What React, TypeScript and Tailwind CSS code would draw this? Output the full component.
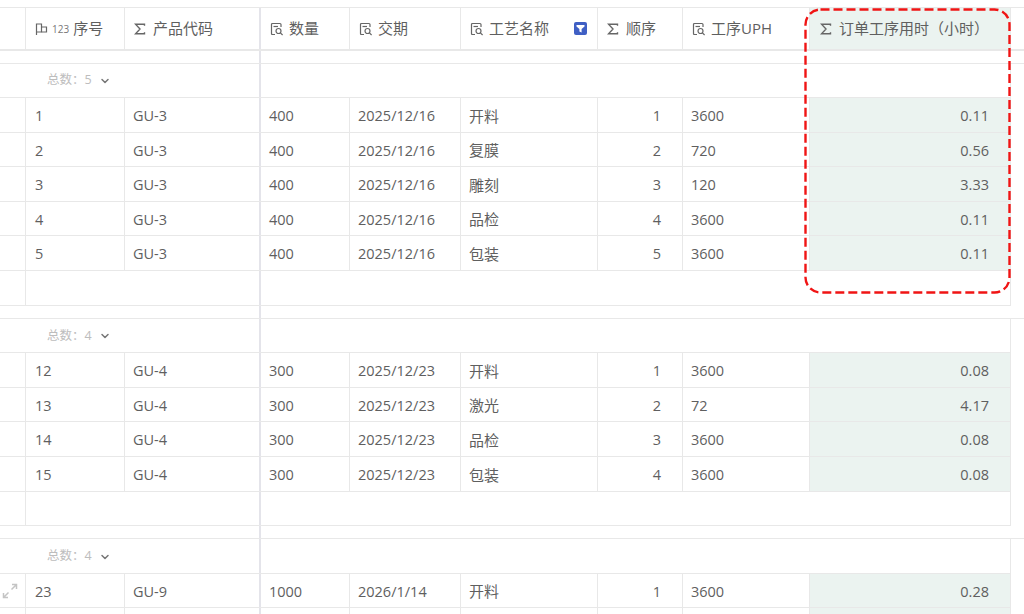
import { ChevronDown } from "lucide-react";

const font = { fontFamily: '"Open Sans","Noto Sans CJK SC",sans-serif' };

const Sigma = () => (
  <svg width="12" height="12" viewBox="0 0 12 12" fill="none" stroke="#666" strokeWidth="1.4" className="shrink-0">
    <path d="M10.5 2.8V1.2H1.5L6 6 1.5 10.8H10.5V9.2" />
  </svg>
);
const DocSearch = () => (
  <svg width="14" height="14" viewBox="0 0 14 14" fill="none" stroke="#666" strokeWidth="1.2" className="shrink-0">
    <path d="M5 12.5H2.5Q1.5 12.5 1.5 11.5V2.5Q1.5 1.5 2.5 1.5H10Q11 1.5 11 2.5V5" />
    <path d="M3.5 4.5H8" />
    <circle cx="8.5" cy="9" r="2.5" />
    <path d="M10.4 10.9L12.6 13" />
  </svg>
);
const Flag = () => (
  <svg width="13" height="14" viewBox="0 0 13 14" fill="none" stroke="#666" strokeWidth="1.2" className="shrink-0">
    <path d="M1.5 13V1.5M1.5 2H6.5V10H1.5" />
    <path d="M6.5 5H11.5V10H6.5" />
  </svg>
);
const Funnel = () => (
  <span className="flex h-[13px] w-[13px] shrink-0 items-center justify-center rounded-[2px] bg-[#3f5fc4]">
    <svg width="9" height="9" viewBox="0 0 9 9" fill="#fff">
      <path d="M0.5 1H8.5V2.6L5.6 5V8.4L3.4 7.4V5L0.5 2.6Z" />
    </svg>
  </span>
);
const ExpandIcon = () => (
  <svg width="16" height="16" viewBox="0 0 16 16" fill="none" stroke="#c4c4c4" strokeWidth="1.5">
    <path d="M9.5 6.5L14.5 1.5M10 1.5H14.5V6M6.5 9.5L1.5 14.5M1.5 10V14.5H6" />
  </svg>
);

const headerCell = "flex h-full items-center border-r border-[#e8e8e8] pl-[9px]";
const dataCell = "flex h-full items-center border-r border-[#e8e8e8] pt-[2px]";

const SigmaLabel = ({ text }: { text: string }) => (
  <span className="flex items-center gap-[7px] whitespace-nowrap">
    <Sigma />
    <span>{text}</span>
  </span>
);
const DocLabel = ({ text }: { text: string }) => (
  <span className="flex items-center gap-[5px] whitespace-nowrap">
    <DocSearch />
    <span>{text}</span>
  </span>
);

const Header = () => (
  <div className="flex h-[44px] w-full items-stretch border-y border-b-2 border-[#e8e8e8] text-[15px] text-[#5f5f5f]">
    <div className="h-full w-[26px] border-r border-[#e8e8e8]" />
    <div className={`${headerCell} w-[99px] gap-[4px]`}>
      <Flag />
      <span className="text-[10px] leading-none text-[#777]">123</span>
      <span>序号</span>
    </div>
    <div className="flex h-full w-[136px] items-center border-r-2 border-[#e4e4ea] pl-[9px]"><SigmaLabel text="产品代码" /></div>
    <div className={`${headerCell} w-[89px]`}><DocLabel text="数量" /></div>
    <div className={`${headerCell} w-[111px]`}><DocLabel text="交期" /></div>
    <div className={`${headerCell} w-[137px] justify-between pr-[10px]`}>
      <DocLabel text="工艺名称" />
      <Funnel />
    </div>
    <div className={`${headerCell} w-[85px]`}><SigmaLabel text="顺序" /></div>
    <div className={`${headerCell} w-[127px]`}><DocLabel text="工序UPH" /></div>
    <div className="flex h-full w-[201px] items-center border-r border-[#e8e8e8] bg-[#ebf3f0] pl-[10px]"><SigmaLabel text="订单工序用时（小时）" /></div>
  </div>
);

const Band = ({ h }: { h: string }) => (
  <div className={`flex w-full border-b border-[#e8e8e8] ${h}`}>
    <div className="h-full w-[261px] border-r-2 border-[#e4e4ea]" />
  </div>
);

const GroupRow = ({ total }: { total: number }) => (
  <div className="flex h-[34.6px] w-[1011px] border-b border-[#e8e8e8]">
    <div className="flex h-full w-[261px] items-center gap-[7px] border-r-2 border-[#e4e4ea] pl-[47px] pt-[1px] text-[12.5px] text-[#bdbdbd]">
      <span>总数：{total}</span>
      <ChevronDown size={12} strokeWidth={3} className="text-[#777]" />
    </div>
    <div className="h-full flex-1 border-r border-[#e8e8e8]" />
  </div>
);

const EmptyRow = () => (
  <div className="flex h-[34.6px] w-[1011px] border-b border-[#e8e8e8]">
    <div className="h-full w-[26px] border-r border-[#e8e8e8]" />
    <div className="h-full w-[235px] border-r-2 border-[#e4e4ea]" />
    <div className="h-full flex-1 border-r border-[#e8e8e8]" />
  </div>
);

type R = [string, string, string, string, string, string, string, string];

const DataRow = ({ r, expand }: { r: R; expand?: boolean }) => (
  <div className="flex h-[34.6px] w-[1011px] border-b border-[#e8e8e8] text-[14.5px] text-[#5f5f5f]">
    <div className="flex h-full w-[26px] items-center justify-center border-r border-[#e8e8e8] pr-[5px]">
      {expand && <ExpandIcon />}
    </div>
    <div className={`${dataCell} w-[99px] pl-[9px]`}>{r[0]}</div>
    <div className="flex h-full w-[136px] items-center border-r-2 border-[#e4e4ea] pl-[8px] pt-[2px]">{r[1]}</div>
    <div className={`${dataCell} w-[89px] pl-[8px]`}>{r[2]}</div>
    <div className={`${dataCell} w-[111px] pl-[8px]`}>{r[3]}</div>
    <div className={`${dataCell} w-[137px] pl-[8px] text-[15px]`}>{r[4]}</div>
    <div className={`${dataCell} w-[85px] justify-end pr-[21px]`}>{r[5]}</div>
    <div className={`${dataCell} w-[127px] pl-[8px]`}>{r[6]}</div>
    <div className={`${dataCell} w-[201px] justify-end bg-[#ebf3f0] pr-[21px]`}>{r[7]}</div>
  </div>
);

const g1: R[] = [
  ["1", "GU-3", "400", "2025/12/16", "开料", "1", "3600", "0.11"],
  ["2", "GU-3", "400", "2025/12/16", "复膜", "2", "720", "0.56"],
  ["3", "GU-3", "400", "2025/12/16", "雕刻", "3", "120", "3.33"],
  ["4", "GU-3", "400", "2025/12/16", "品检", "4", "3600", "0.11"],
  ["5", "GU-3", "400", "2025/12/16", "包装", "5", "3600", "0.11"],
];
const g2: R[] = [
  ["12", "GU-4", "300", "2025/12/23", "开料", "1", "3600", "0.08"],
  ["13", "GU-4", "300", "2025/12/23", "激光", "2", "72", "4.17"],
  ["14", "GU-4", "300", "2025/12/23", "品检", "3", "3600", "0.08"],
  ["15", "GU-4", "300", "2025/12/23", "包装", "4", "3600", "0.08"],
];

export default function App() {
  return (
    <div className="relative h-[614px] w-[1024px] overflow-hidden bg-white pt-[7px]" style={font}>
      <Header />
      <Band h="h-[12.5px]" />
      <GroupRow total={5} />
      {g1.map((r) => <DataRow key={r[0]} r={r} />)}
      <EmptyRow />
      <Band h="h-[13px]" />
      <GroupRow total={4} />
      {g2.map((r) => <DataRow key={r[0]} r={r} />)}
      <EmptyRow />
      <Band h="h-[13px]" />
      <GroupRow total={4} />
      <DataRow expand r={["23", "GU-9", "1000", "2026/1/14", "开料", "1", "3600", "0.28"]} />
      <DataRow r={["", "", "", "", "", "", "", ""]} />
      <svg className="absolute left-[803px] top-[7px]" width="210" height="288" fill="none">
        <rect x="2.5" y="2.5" width="204" height="283" rx="15" stroke="#f01414" strokeWidth="2.4" strokeDasharray="9 4" />
      </svg>
    </div>
  );
}
